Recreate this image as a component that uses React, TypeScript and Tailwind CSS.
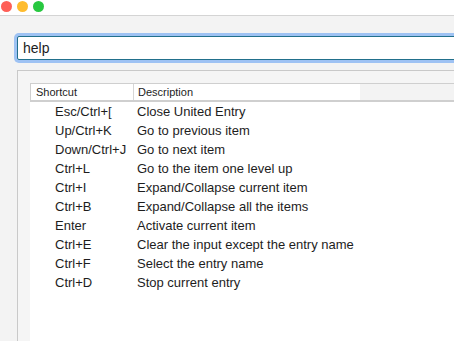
const ROWS: [string, string][] = [
  ["Esc/Ctrl+[", "Close United Entry"],
  ["Up/Ctrl+K", "Go to previous item"],
  ["Down/Ctrl+J", "Go to next item"],
  ["Ctrl+L", "Go to the item one level up"],
  ["Ctrl+I", "Expand/Collapse current item"],
  ["Ctrl+B", "Expand/Collapse all the items"],
  ["Enter", "Activate current item"],
  ["Ctrl+E", "Clear the input except the entry name"],
  ["Ctrl+F", "Select the entry name"],
  ["Ctrl+D", "Stop current entry"],
];

export default function App() {
  return (
    <div className="h-[341px] w-[454px] overflow-hidden bg-[#f3f3f3] font-['Liberation_Sans',Arial,sans-serif] text-[#1d1d1d]">
      {/* title bar */}
      <div className="flex h-[16px] items-center gap-[5px] border-b border-[#d4d4d4] bg-white pl-[1px] pb-[2px]">
        <span className="h-[11px] w-[11px] rounded-full bg-[#fe5f57]" />
        <span className="h-[11px] w-[11px] rounded-full bg-[#febc2e]" />
        <span className="h-[11px] w-[11px] rounded-full bg-[#28c840]" />
      </div>

      {/* search */}
      <div className="ml-[17px] mt-[20px] flex h-[24px] w-[460px] items-center rounded-[2px] border border-[#22708c] bg-white pl-[5px] text-[14px] shadow-[0_0_0_3px_#9ec2f3]">
        help
      </div>

      {/* panel */}
      <div className="ml-[17px] mt-[10px] h-[300px] w-[460px] border border-[#c9c9c9] bg-[#f5f5f5] pl-[12px] pt-[12px]">
        <div className="h-full bg-white">
          <div className="flex h-[19px] border-t border-b-2 border-[#cfcfcf] bg-[#f3f3f3] text-[11px]">
            <div className="flex w-[330px] border-l border-[#cfcfcf] bg-white">
              <div className="flex w-[103px] items-center border-r border-[#d6d6d6] pl-[5px]">Shortcut</div>
              <div className="flex items-center pl-[4px]">Description</div>
            </div>
          </div>
          {ROWS.map(([key, desc]) => (
            <div key={key} className="flex h-[19px] items-center text-[13px]">
              <span className="w-[107px] pl-[25px]">{key}</span>
              <span>{desc}</span>
            </div>
          ))}
        </div>
      </div>
    </div>
  );
}
